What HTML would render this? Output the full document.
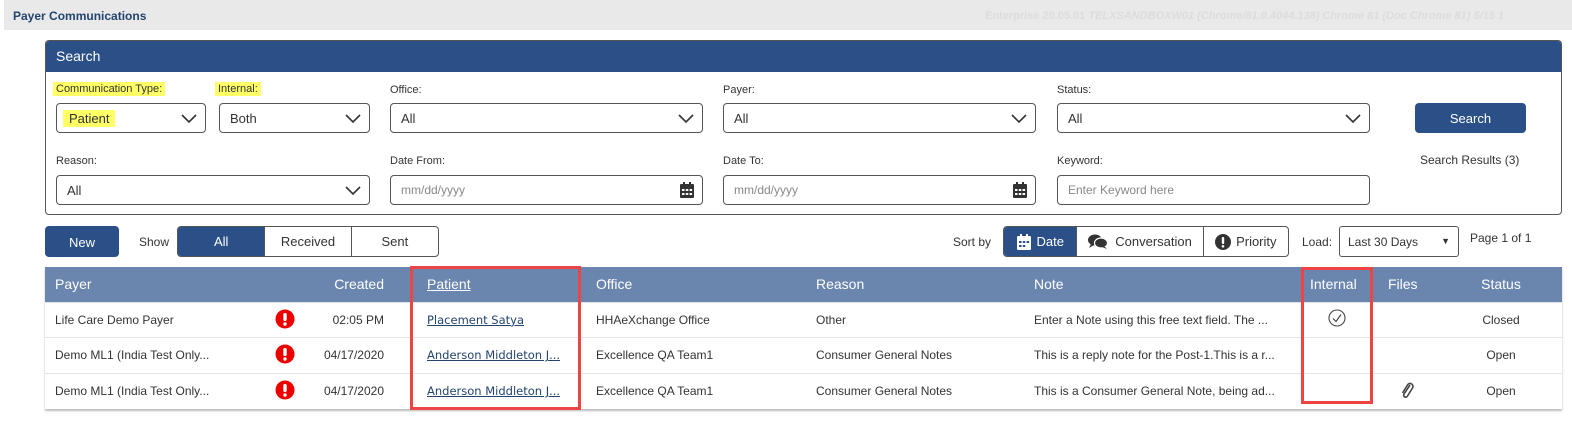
<!DOCTYPE html>
<html><head><meta charset="utf-8"><style>
*{box-sizing:border-box;margin:0;padding:0}
body{width:1572px;height:422px;background:#fff;font-family:"Liberation Sans",sans-serif;font-size:12px;color:#333;position:relative;overflow:hidden}
.a{position:absolute}
.top{left:4px;top:0;width:1568px;height:30px;background:#e9e9e9}
.title{left:13px;top:9px;font-weight:bold;font-size:12px;color:#23446e}
.ver{left:985px;top:10px;font-size:11px;font-weight:bold;color:#dcdcdc;white-space:nowrap}
.panel{left:45px;top:40px;width:1517px;height:175px;border:1px solid #555;border-radius:4px;overflow:hidden}
.ph{left:0;top:0;width:100%;height:31px;background:#2a5087;color:#fff;font-size:14px;padding:7px 10px}
.lbl{font-size:11px;color:#333}
.hl{background:#ffff66;padding:1px 3px}
.sel{height:30px;border:1px solid #555;border-radius:4px;background:#fff;font-size:13px;padding:7px 10px;color:#333}
.sel svg{position:absolute;right:8px;top:8px}
.ph2{color:#888}
.btn{background:#2a5087;color:#fff;border-radius:4px;text-align:center;font-size:13px}
.seg{border:1px solid #555;border-radius:4px;height:31px;display:flex;overflow:hidden}
.seg div{display:flex;align-items:center;justify-content:center;font-size:13px;border-left:1px solid #555;height:100%}
.seg div:first-child{border-left:none}
.seg .on{background:#2a5087;color:#fff}
table{border-collapse:collapse;position:absolute;left:45px;top:267px;width:1517px;box-shadow:0 2px 2px #bbb;table-layout:fixed}
th{background:#6a86ae;color:#fff;font-weight:normal;font-size:14px;height:35px;text-align:left;padding-left:10px;white-space:nowrap}
td{height:35.6px;font-size:12px;padding-left:10px;border-top:1px solid #e3e3e3;white-space:nowrap;overflow:hidden}
a{color:#23446e;text-decoration:underline;font-family:"DejaVu Sans",sans-serif;font-size:11.5px}
.box{border:3px solid #e44;position:absolute}
.r{text-align:right;padding-right:27px;padding-left:0}
.c{text-align:center;padding-left:0}
</style></head><body>
<div class="a top"></div>
<div class="a title">Payer Communications</div>
<div class="a ver">Enterprise 20.05.01 <i>TELXSANDBOXW01 (Chrome/81.0.4044.138) Chrome 81 (Doc Chrome 81) 5/15 1</i></div>

<div class="a panel"><div class="a ph">Search</div></div>
<div class="a lbl" style="left:53px;top:83px"><span class="hl">Communication Type:</span></div>
<div class="a lbl" style="left:215px;top:83px"><span class="hl">Internal:</span></div>
<div class="a lbl" style="left:390px;top:84px">Office:</div>
<div class="a lbl" style="left:723px;top:84px">Payer:</div>
<div class="a lbl" style="left:1057px;top:84px">Status:</div>
<div class="a lbl" style="left:56px;top:155px">Reason:</div>
<div class="a lbl" style="left:390px;top:155px">Date From:</div>
<div class="a lbl" style="left:723px;top:155px">Date To:</div>
<div class="a lbl" style="left:1057px;top:155px">Keyword:</div>

<svg width="0" height="0" style="position:absolute"><defs><symbol id="chev" viewBox="0 0 16 10"><path d="M1 1L8 8L15 1" fill="none" stroke="#333" stroke-width="1.6"/></symbol>
<symbol id="cal" viewBox="0 0 14 16"><rect x="3" y="0" width="2" height="3" fill="#333"/><rect x="9" y="0" width="2" height="3" fill="#333"/><rect x="0" y="2" width="14" height="14" rx="1" fill="#333"/><g fill="#fff"><rect x="2" y="7" width="2.5" height="2"/><rect x="5.8" y="7" width="2.5" height="2"/><rect x="9.6" y="7" width="2.5" height="2"/><rect x="2" y="11" width="2.5" height="2"/><rect x="5.8" y="11" width="2.5" height="2"/><rect x="9.6" y="11" width="2.5" height="2"/></g></symbol></defs></svg>

<div class="a sel" style="left:56px;top:103px;width:150px"><span class="hl" style="padding:1px 6px 1px 6px;margin-left:-4px">Patient</span><svg width="16" height="10" style="top:10px"><use href="#chev"/></svg></div>
<div class="a sel" style="left:219px;top:103px;width:151px">Both<svg width="16" height="10" style="top:10px"><use href="#chev"/></svg></div>
<div class="a sel" style="left:390px;top:103px;width:313px">All<svg width="16" height="10" style="top:10px"><use href="#chev"/></svg></div>
<div class="a sel" style="left:723px;top:103px;width:313px">All<svg width="16" height="10" style="top:10px"><use href="#chev"/></svg></div>
<div class="a sel" style="left:1057px;top:103px;width:313px">All<svg width="16" height="10" style="top:10px"><use href="#chev"/></svg></div>
<div class="a btn" style="left:1415px;top:103px;width:111px;height:30px;padding-top:8px">Search</div>
<div class="a" style="left:1420px;top:153px;font-size:12px">Search Results (3)</div>

<div class="a sel" style="left:56px;top:175px;width:314px">All<svg width="16" height="10" style="top:10px"><use href="#chev"/></svg></div>
<div class="a sel ph2" style="left:390px;top:175px;width:313px;font-size:12px">mm/dd/yyyy<svg width="14" height="16" style="top:6px"><use href="#cal"/></svg></div>
<div class="a sel ph2" style="left:723px;top:175px;width:313px;font-size:12px">mm/dd/yyyy<svg width="14" height="16" style="top:6px"><use href="#cal"/></svg></div>
<div class="a sel ph2" style="left:1057px;top:175px;width:313px;font-size:12px">Enter Keyword here</div>

<div class="a btn" style="left:45px;top:226px;width:74px;height:31px;padding-top:9px">New</div>
<div class="a" style="left:139px;top:235px;font-size:12px">Show</div>
<div class="a seg" style="left:177px;top:226px;width:262px"><div class="on" style="width:87px">All</div><div style="width:87px">Received</div><div style="width:88px">Sent</div></div>

<div class="a" style="left:953px;top:235px;font-size:12px">Sort by</div>
<div class="a seg" style="left:1003px;top:226px;width:286px">
<div class="on" style="width:73px"><svg width="14" height="16" style="margin-right:6px"><rect x="3" y="0" width="2" height="3" fill="#fff"/><rect x="9" y="0" width="2" height="3" fill="#fff"/><rect x="0" y="2" width="14" height="14" rx="1" fill="#fff"/><g fill="#2a5087"><rect x="2" y="7" width="2.5" height="2"/><rect x="5.8" y="7" width="2.5" height="2"/><rect x="9.6" y="7" width="2.5" height="2"/><rect x="2" y="11" width="2.5" height="2"/><rect x="5.8" y="11" width="2.5" height="2"/></g></svg>Date</div>
<div style="width:127px"><svg width="20" height="15" style="margin-right:7px"><ellipse cx="7" cy="6" rx="7" ry="5.5" fill="#333"/><ellipse cx="13" cy="9" rx="6.5" ry="5" fill="#333" stroke="#fff" stroke-width="1.2"/><path d="M3 10L1 14L6 11Z" fill="#333"/><path d="M16 12L19 15L14 13Z" fill="#333"/></svg>Conversation</div>
<div style="width:86px"><svg width="16" height="16" style="margin-right:5px"><circle cx="8" cy="8" r="8" fill="#333"/><rect x="6.8" y="3" width="2.4" height="7" rx="1" fill="#fff"/><circle cx="8" cy="12.3" r="1.3" fill="#fff"/></svg>Priority</div></div>
<div class="a" style="left:1302px;top:235px;font-size:12px">Load:</div>
<div class="a" style="left:1339px;top:226px;width:120px;height:31px;border:1px solid #555;border-radius:3px;font-size:12px;padding:8px 8px">Last 30 Days<span style="position:absolute;right:8px;top:9px;font-size:9px">▼</span></div>
<div class="a" style="left:1470px;top:231px;font-size:12px">Page 1 of 1</div>

<table>
<colgroup><col style="width:220px"><col style="width:40px"><col style="width:106px"><col style="width:175px"><col style="width:220px"><col style="width:218px"><col style="width:276px"><col style="width:78px"><col style="width:62px"><col style="width:122px"></colgroup>
<tr><th>Payer</th><th></th><th class="r">Created</th><th style="padding-left:16px"><u>Patient</u></th><th>Office</th><th>Reason</th><th>Note</th><th>Internal</th><th>Files</th><th class="c">Status</th></tr>
<tr><td>Life Care Demo Payer</td><td></td><td class="r">02:05 PM</td><td style="padding-left:16px"><a>Placement Satya</a></td><td>HHAeXchange Office</td><td>Other</td><td>Enter a Note using this free text field. The ...</td><td style="padding-left:28px"><svg width="18" height="18"><circle cx="9" cy="9" r="8" fill="none" stroke="#444" stroke-width="1.1"/><path d="M5 9.5L8 12.5L13 5.5" fill="none" stroke="#444" stroke-width="1.2"/></svg></td><td></td><td class="c">Closed</td></tr>
<tr><td>Demo ML1 (India Test Only...</td><td></td><td class="r">04/17/2020</td><td style="padding-left:16px"><a>Anderson Middleton J...</a></td><td>Excellence QA Team1</td><td>Consumer General Notes</td><td>This is a reply note for the Post-1.This is a r...</td><td></td><td></td><td class="c">Open</td></tr>
<tr><td>Demo ML1 (India Test Only...</td><td></td><td class="r">04/17/2020</td><td style="padding-left:16px"><a>Anderson Middleton J...</a></td><td>Excellence QA Team1</td><td>Consumer General Notes</td><td>This is a Consumer General Note, being ad...</td><td></td><td style="padding-left:22px"><svg width="14" height="20" viewBox="0 0 14 20"><path d="M10 5L4 14C2.5 16.5 6 18.5 7.5 16L12.5 8C14.5 4.5 9.5 1.5 7.5 5L2.5 13" fill="none" stroke="#444" stroke-width="1.6"/></svg></td><td class="c">Open</td></tr>
</table>
<svg class="a" style="left:275px;top:309px" width="20" height="20"><circle cx="10" cy="10" r="9.5" fill="#e00"/><rect x="8.3" y="4" width="3.4" height="8" rx="1.5" fill="#fff"/><circle cx="10" cy="15" r="1.7" fill="#fff"/></svg>
<svg class="a" style="left:275px;top:344px" width="20" height="20"><circle cx="10" cy="10" r="9.5" fill="#e00"/><rect x="8.3" y="4" width="3.4" height="8" rx="1.5" fill="#fff"/><circle cx="10" cy="15" r="1.7" fill="#fff"/></svg>
<svg class="a" style="left:275px;top:380px" width="20" height="20"><circle cx="10" cy="10" r="9.5" fill="#e00"/><rect x="8.3" y="4" width="3.4" height="8" rx="1.5" fill="#fff"/><circle cx="10" cy="15" r="1.7" fill="#fff"/></svg>
<div class="box" style="left:410px;top:266px;width:171px;height:144px"></div>
<div class="box" style="left:1301px;top:267px;width:72px;height:137px"></div>
</body></html>
